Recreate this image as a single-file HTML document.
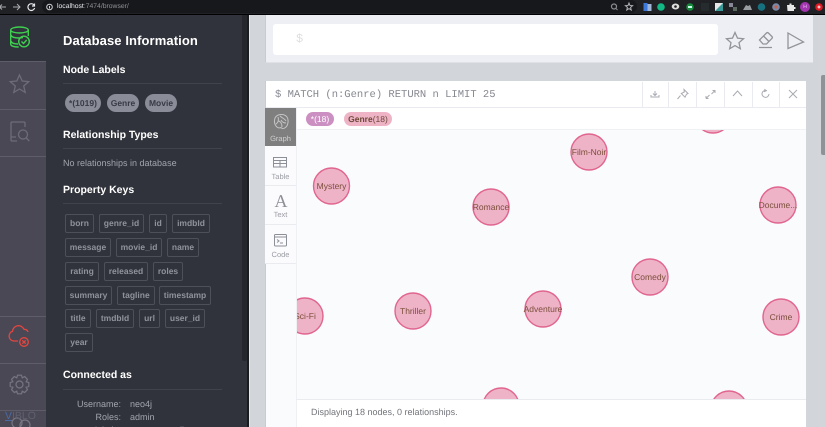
<!DOCTYPE html>
<html><head><meta charset="utf-8"><style>
*{box-sizing:border-box}
html,body{margin:0;padding:0;width:825px;height:427px;overflow:hidden;background:#d2d5da;font-family:"Liberation Sans",sans-serif;text-rendering:geometricPrecision}
#r{position:relative;width:825px;height:427px;overflow:hidden}
.a{position:absolute}
.h{position:absolute;left:63px;color:#fff;font-weight:bold;font-size:10.5px;white-space:nowrap}
.ln{position:absolute;left:63px;width:159px;height:1px;background:#40434c}
.pl{position:absolute;top:94px;height:18px;border-radius:9px;background:#8a8c98;color:#383b45;font-weight:bold;font-size:8.5px;line-height:18px;text-align:center}
.k{position:absolute;height:19px;border:1px solid #4d5059;border-radius:2px;color:#8f919b;font-weight:bold;font-size:8.5px;line-height:17px;text-align:center;white-space:nowrap}
.si{position:absolute;left:0;width:46px;background:#4a4855;border-top:1px solid #5d5c68}
.tab{position:absolute;left:265px;width:31px;background:#fbfbfd;border-bottom:1px solid #e9ebef;text-align:center;color:#9a9ca3;font-size:7.5px}
.sp{position:absolute;top:82px;width:1px;height:25px;background:#e9ebf0}
</style></head><body><div id="r">

<!-- browser bar -->
<div class="a" style="left:0;top:0;width:825px;height:15px;background:#202124;border-bottom:1px solid #000"></div>
<div class="a" style="left:42px;top:0;width:595px;height:13px;border-radius:7px;background:#17181b"></div>
<svg class="a" style="left:0;top:0" width="825" height="15" fill="none">
<path d="M6 7H0M2 4.500L-.5 7 2 9.500" stroke="#a9abae"/><path d="M13 7h7M17 4l3 3-3 3" stroke="#a9abae"/>
<path d="M34 5a3.400 3.400 0 1 0 .6 3M34.500 3.500v2.500h-2.500" stroke="#e8eaed" stroke-width="1.200"/>
<circle cx="49.500" cy="7" r="2.800" stroke="#d0d2d4"/><path d="M49.500 6v2.500" stroke="#d0d2d4"/>
<circle cx="614" cy="6.500" r="2.500" stroke="#8b8d90" stroke-width="1.200"/><path d="M616 8.500l1.500 1.500" stroke="#8b8d90"/>
<path d="M629 3l1 2.500 2.600.2-2 1.700.6 2.600-2.200-1.400-2.200 1.400.6-2.600-2-1.700 2.600-.2z" stroke="#b2b4b6"/>
<rect x="643.500" y="3" width="4" height="8" fill="#3b78d8"/><rect x="647.500" y="4" width="4" height="7" fill="#9fb6d8"/>
<circle cx="661" cy="7" r="3.800" fill="#12b886"/>
<ellipse cx="675.500" cy="6.500" rx="3.800" ry="3" fill="#ddd"/><circle cx="675.500" cy="6.500" r="1.300" fill="#222"/>
<circle cx="690" cy="7" r="3.800" fill="#178a3c"/><rect x="688" y="6" width="4" height="2" fill="#cfe"/>
<rect x="701" y="3" width="8" height="8" fill="#262b2e"/>
<rect x="715" y="3" width="8" height="8" fill="#e8e8e8"/><path d="M715 11l8-8v8z" fill="#3a9a9a"/>
<rect x="729" y="3" width="4" height="4" fill="#889"/><rect x="733" y="7" width="4" height="4" fill="#5a6a5e"/>
<path d="M743 10l3-5 2 1 2-1 2 5z" fill="#9a9ea2"/>
<circle cx="761.500" cy="7" r="3.800" fill="#17707e"/>
<circle cx="776" cy="7" r="3.800" fill="#7b88a8"/><circle cx="776" cy="7" r="1.600" fill="#c2644f"/>
<path d="M787 5h2.500v-1.500h2v1.500h2.500v2h1.500v2h-1.500v2h-6.500z" fill="#e8e8e8"/>
<circle cx="805" cy="7" r="5" fill="#a335b0"/>
<circle cx="819" cy="7" r="3.800" fill="#e01b24"/><path d="M817.500 7h3M819 5.500v3" stroke="#fff"/>
</svg>
<div class="a" style="left:57px;top:2px;font-size:6.800px;line-height:10px;color:#e8eaed;white-space:nowrap">localhost<span style="color:#8f9296">:7474/browser/</span></div>
<div class="a" style="left:802px;top:4px;width:6px;font-size:5px;line-height:6px;color:#f0d0f4;text-align:center">H</div>

<!-- left icon column -->
<div class="a" style="left:0;top:15px;width:47px;height:412px;background:#30333b"></div>
<div class="si" style="top:61px;height:48px"></div>
<div class="si" style="top:109px;height:47px"></div>
<div class="si" style="top:156px;height:160px"></div>
<div class="si" style="top:316px;height:47px"></div>
<div class="si" style="top:363px;height:47px"></div>
<div class="si" style="top:410px;height:17px"></div>
<svg class="a" style="left:0;top:15px" width="47" height="412" fill="none">
<g stroke="#3ed14f" stroke-width="1.400"><ellipse cx="19.500" cy="15" rx="8.800" ry="3"/><path d="M10.700 15v14c0 2 3.500 3 8 3M28.300 15v6M10.700 20c1 2 4 3 8.300 3 1.500 0 3-.2 4-.5M10.700 26c1 2 4 3 7.300 3"/><circle cx="24" cy="26.500" r="5.300"/><path d="M21.500 26.500l2 2 3.200-3.500"/></g>
<path d="M19.500 60l2.700 6 6.500.6-5 4.400 1.500 6.400-5.700-3.400-5.700 3.400 1.500-6.400-5-4.400 6.500-.6z" stroke="#6d6c77" stroke-width="1.300"/>
<g stroke="#6d6c77" stroke-width="1.300"><path d="M25 112v-4a1 1 0 0 0-1-1H12a1 1 0 0 0-1 1v17a1 1 0 0 0 1 1h5M11 122h5"/><circle cx="23" cy="119.500" r="4.500"/><path d="M26.300 123l3 3"/></g>
<g stroke="#e5463f" stroke-width="1.300"><path d="M18 326h-4.500a5 5 0 0 1-1-9.700 6 6 0 0 1 11.500-2c2 0 3.500 1 4 2.700"/><circle cx="24" cy="327" r="4.300"/><path d="M22.300 325.300l3.400 3.400M25.700 325.300l-3.400 3.400"/></g>
<g stroke="#767580" stroke-width="1.200" transform="translate(19.500 369.500)"><circle r="3.500"/><path d="M6.650 2.760L7.970 5.170 5.170 7.970 2.760 6.650 1.980 9.290-1.980 9.290-2.760 6.650-5.170 7.970-7.970 5.170-6.650 2.760-9.290 1.980-9.290-1.980-6.650-2.760-7.970-5.170-5.170-7.970-2.760-6.650-1.980-9.290 1.980-9.290 2.760-6.650 5.170-7.970 7.970-5.170 6.650-2.760 9.290-1.980 9.290 1.980z"/></g>
<g stroke="#767580" stroke-width="1.200"><circle cx="17" cy="408" r="5"/><circle cx="25" cy="410" r="5"/></g>
</svg>
<div class="a" style="left:5px;top:409px;font-size:10.500px;line-height:14px;color:#5f6070;white-space:nowrap"><span style="color:#4a6aa5;text-decoration:underline">V</span>IBLO</div>

<!-- info panel -->
<div class="a" style="left:47px;top:15px;width:195px;height:412px;background:#30333b"></div>
<div class="a" style="left:242px;top:15px;width:5px;height:412px;background:#30333b"></div>
<div class="a" style="left:242px;top:15px;width:5px;height:346px;background:#25272c;border-radius:0 0 2px 2px"></div>
<div class="a" style="left:247px;top:15px;width:2px;height:412px;background:#1b1c20"></div>
<div class="a" style="left:249px;top:15px;width:1px;height:412px;background:#e6e7ea"></div>
<div class="h" style="top:32px;font-size:13px;letter-spacing:.1px;line-height:17px">Database Information</div>
<div class="h" style="top:64px;line-height:13px">Node Labels</div><div class="ln" style="top:83px"></div>
<div class="pl" style="left:65px;width:36px">*(1019)</div>
<div class="pl" style="left:107px;width:32px">Genre</div>
<div class="pl" style="left:145px;width:32px">Movie</div>
<div class="h" style="top:129px;line-height:13px">Relationship Types</div><div class="ln" style="top:148px"></div>
<div class="a" style="left:63px;top:157px;font-size:9px;line-height:12px;color:#a3a5ae;white-space:nowrap">No relationships in database</div>
<div class="h" style="top:184px;line-height:13px">Property Keys</div><div class="ln" style="top:203px"></div>
<div class="k" style="left:65px;top:214px;width:29px">born</div>
<div class="k" style="left:99px;top:214px;width:45px">genre_id</div>
<div class="k" style="left:149px;top:214px;width:18px">id</div>
<div class="k" style="left:172px;top:214px;width:38px">imdbId</div>
<div class="k" style="left:65px;top:238px;width:46px">message</div>
<div class="k" style="left:116px;top:238px;width:46px">movie_id</div>
<div class="k" style="left:167px;top:238px;width:32px">name</div>
<div class="k" style="left:65px;top:262px;width:34px">rating</div>
<div class="k" style="left:104px;top:262px;width:44px">released</div>
<div class="k" style="left:153px;top:262px;width:30px">roles</div>
<div class="k" style="left:65px;top:286px;width:47px">summary</div>
<div class="k" style="left:117px;top:286px;width:38px">tagline</div>
<div class="k" style="left:159px;top:286px;width:52px">timestamp</div>
<div class="k" style="left:65px;top:309px;width:26px">title</div>
<div class="k" style="left:96px;top:309px;width:38px">tmdbId</div>
<div class="k" style="left:139px;top:309px;width:21px">url</div>
<div class="k" style="left:165px;top:309px;width:40px">user_id</div>
<div class="k" style="left:65px;top:333px;width:28px">year</div>
<div class="h" style="top:369px;line-height:13px">Connected as</div><div class="ln" style="top:389px"></div>
<div class="a" style="left:60px;top:398px;width:61px;text-align:right;font-size:9px;line-height:13px;color:#a3a5ae">Username:</div>
<div class="a" style="left:130px;top:398px;font-size:9px;line-height:13px;color:#a3a5ae">neo4j</div>
<div class="a" style="left:60px;top:411px;width:61px;text-align:right;font-size:9px;line-height:13px;color:#a3a5ae">Roles:</div>
<div class="a" style="left:130px;top:411px;font-size:9px;line-height:13px;color:#a3a5ae">admin</div>
<div class="a" style="left:60px;top:424px;width:61px;text-align:right;font-size:9px;line-height:13px;color:#a3a5ae">Admin:</div>
<div class="a" style="left:130px;top:424px;font-size:9px;line-height:13px;color:#a3a5ae">:server user list</div>

<!-- editor -->
<div class="a" style="left:265px;top:15px;width:548px;height:48px;background:#eeeff4;border-left:1px solid #c8cbd0;border-bottom:1px solid #dfe1e6"></div>
<div class="a" style="left:273px;top:24px;width:445px;height:31px;background:#fff;border-radius:3px"></div>
<div class="a" style="left:296px;top:31px;font-family:'Liberation Mono',monospace;font-size:12px;line-height:16px;color:#dddee2">$</div>
<svg class="a" style="left:720px;top:28px" width="90" height="24" fill="none" stroke="#92949b" stroke-width="1.300">
<path d="M15 4.500l2.500 5.600 6 .6-4.500 4 1.300 6-5.300-3.100-5.300 3.100 1.300-6-4.500-4 6-.6z"/>
<path d="M39.500 12l7-7c.6-.6 1.300-.6 1.900 0l3.500 3.500c.6.600.6 1.300 0 1.900L46.500 16H43l-3.500-4zM43.500 8l5 5M39 19.500h13"/>
<path d="M68.500 5.500L84 14.500 68.500 21z" transform="translate(-.5 -.5)"/>
</svg>

<!-- page scrollbar -->
<div class="a" style="left:821px;top:75px;width:4px;height:80px;background:#8f9297;border-radius:2px 0 0 2px"></div>

<!-- result frame -->
<div class="a" style="left:265px;top:81px;width:541px;height:346px;background:#fafbfd;border-left:1px solid #c8cbd0"></div>
<div class="a" style="left:266px;top:81px;width:540px;height:26px;background:#fff"></div>
<div class="a" style="left:275px;top:87px;font-family:'Liberation Mono',monospace;font-size:10.500px;line-height:16px;color:#868890;white-space:nowrap">$ MATCH (n:Genre) RETURN n LIMIT 25</div>
<div class="a" style="left:266px;top:107px;width:540px;height:1px;background:#e9ebf0"></div>
<div class="sp" style="left:642px"></div>
<div class="sp" style="left:668px"></div>
<div class="sp" style="left:696px"></div>
<div class="sp" style="left:724px"></div>
<div class="sp" style="left:752px"></div>
<div class="sp" style="left:779px"></div>
<svg class="a" style="left:640px;top:82px" width="166" height="25" fill="none" stroke="#a9abb1" stroke-width="1">
<path d="M15 9v4.500M13 11.500l2 2 2-2M11 13v2h8v-2"/>
<path d="M44 7.500l4 4-1.500.7-1.500 3-3.700-3.700 3-1.500zM40.500 13.500L37.500 17"/>
<path d="M72.500 8.500H75V11M75 8.500L71.500 12M66 16.500V14M66 16.500h2.500M66 16.500l3.500-3.500"/>
<path d="M93 14l4.500-5 4.500 5"/>
<path d="M129 12a3.500 3.500 0 1 1-2-3.300M124.500 7l1.500 1.800-2 1"/>
<path d="M149 8l8 8M157 8l-8 8"/>
</svg>

<!-- graph header -->
<div class="a" style="left:296px;top:108px;width:510px;height:22px;background:#fff;border-left:1px solid #eef0f4"></div>
<!-- legend -->
<div class="a" style="left:306px;top:112px;width:28px;height:14px;border-radius:7px;background:#cc8fc1;color:#fff;font-size:8.500px;line-height:14px;text-align:center">*(18)</div>
<div class="a" style="left:344px;top:112px;width:48px;height:14px;border-radius:7px;background:#efb3c6;color:#6b4a37;font-size:8.500px;line-height:14px;text-align:center"><b>Genre</b>(18)</div>

<!-- tabs -->
<div class="tab" style="top:108px;height:38px;background:#7f7f7f;color:#d0d0d0;padding-top:26px;line-height:9px;border:0">Graph</div>
<div class="tab" style="top:146px;height:40px;padding-top:26px;line-height:9px">Table</div>
<div class="tab" style="top:186px;height:39px;padding-top:24px;line-height:9px">Text</div>
<div class="tab" style="top:225px;height:39px;padding-top:25px;line-height:9px">Code</div>
<div class="a" style="left:271px;top:192px;width:20px;text-align:center;font-family:'Liberation Serif',serif;font-size:18px;line-height:18px;color:#8d8f96">A</div>
<svg class="a" style="left:266px;top:108px" width="30" height="156" fill="none">
<g stroke="#c4c4c4" stroke-width="1"><path d="M9 10c2-4 9-5 12-1 2 3 1 8-1 10s-4 2-5 .5c-2 1-4 0-5-1.500-1.500-2-2-5-1-8zM12 9c1 3 0 6-2 7M14 8c2 2 5 3 6 5M12 13c2 0 4 2 4 6M15 12c1 2 3 3 5 3"/></g>
<g stroke="#8d8f96" stroke-width="1"><rect x="7.500" y="49.500" width="13" height="9.500"/><path d="M7.500 52.500h13M7.500 55.500h13M14 52.500V59"/></g>
<g stroke="#8d8f96" stroke-width="1"><rect x="8.500" y="126.500" width="12" height="11.500" rx="1"/><path d="M8.500 129h12M11 131.500l2 1.500-2 1.500M14 135h3"/></g>
</svg>

<!-- graph -->
<div class="a" style="left:296px;top:129px;width:510px;height:270px;background:#fafbfd;border-top:1px solid #f0f1f5;border-left:1px solid #eef0f4;overflow:hidden">
<svg width="510" height="270" style="position:absolute;left:-1px;top:-1px" font-family="Liberation Sans, sans-serif" font-size="8.500" fill="#7b4f3c" text-anchor="middle">
<g fill="#eeb3c6" stroke="#e0658f" stroke-width="1.400">
<circle cx="417" cy="-14" r="18"/><circle cx="35.500" cy="57" r="18"/><circle cx="195" cy="78" r="18"/><circle cx="293" cy="23" r="18"/><circle cx="482" cy="76" r="18"/><circle cx="354" cy="148" r="18"/><circle cx="247" cy="180" r="18"/><circle cx="485" cy="188" r="18"/><circle cx="117" cy="182" r="18"/><circle cx="9" cy="187" r="18"/><circle cx="205" cy="277" r="18"/><circle cx="433" cy="280" r="18"/>
</g>
<text x="35.500" y="60">Mystery</text><text x="195" y="81">Romance</text><text x="293" y="26">Film-Noir</text><text x="482" y="79">Docume...</text><text x="354" y="151">Comedy</text><text x="247" y="183">Adventure</text><text x="485" y="191">Crime</text><text x="117" y="185">Thriller</text><text x="9" y="190">Sci-Fi</text>
</svg></div>

<!-- footer -->
<div class="a" style="left:296px;top:399px;width:510px;height:28px;background:#fff;border-top:1px solid #e9ebef;border-left:1px solid #eef0f4"></div>
<div class="a" style="left:311px;top:406px;font-size:9px;line-height:13px;color:#72747a;white-space:nowrap">Displaying 18 nodes, 0 relationships.</div>
</div></body></html>
